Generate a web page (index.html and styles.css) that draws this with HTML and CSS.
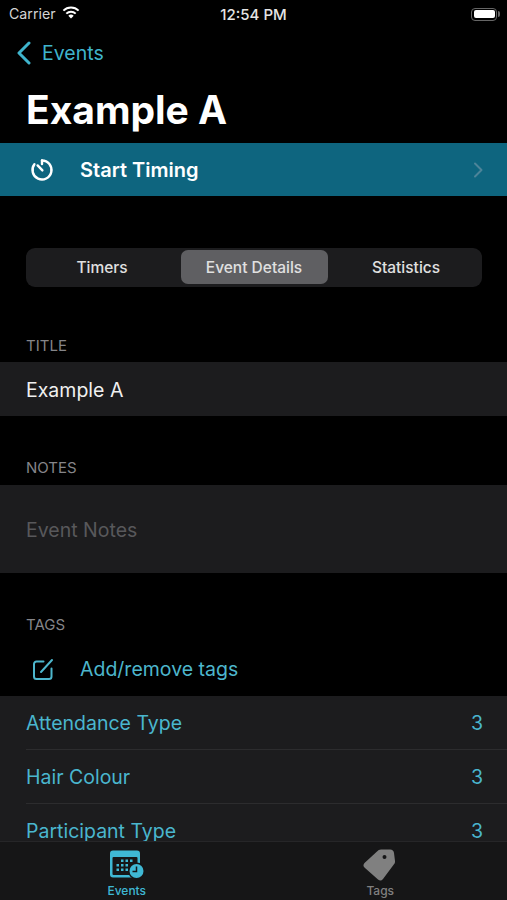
FILE: index.html
```html
<!DOCTYPE html>
<html lang="en">
<head>
    <meta charset="UTF-8">
    <meta name="viewport" content="width=device-width, initial-scale=1.0">
    <title>Example A</title>
    <link rel="stylesheet" href="styles.css">
</head>
<body>

<div class="screen">
    <div class="content">
        <div class="status-bar">
            <div class="status-left">
                <span>Carrier</span>
                <svg class="wifi" width="18" height="13" viewBox="0 0 18 13">
                    <path d="M9 12.6 6.3 9.7a3.900 3.900 0 0 1 5.400 0Z" fill="#fff"/>
                    <path d="M4.300 7.600a6.800 6.800 0 0 1 9.400 0" fill="none" stroke="#fff" stroke-width="2"/>
                    <path d="M1.400 4.600a10.900 10.900 0 0 1 15.200 0" fill="none" stroke="#fff" stroke-width="2"/>
                </svg>
            </div>
            <span class="status-time">12:54 PM</span>
            <div class="battery"><div class="battery-fill"></div></div>
        </div>

        <a class="back-link" href="#">
            <svg width="16" height="24" viewBox="0 0 16 24">
                <path d="M13 2 3 12l10 10" fill="none" stroke="#3fb4cc" stroke-width="3" stroke-linecap="round" stroke-linejoin="round"/>
            </svg>
            <span>Events</span>
        </a>

        <h1>Example A</h1>

        <a class="start-timing" href="#">
            <svg class="row-icon" width="24" height="24" viewBox="0 0 24 24">
                <path d="M12 2.500a9.500 9.500 0 1 1-7.600 3.800" fill="none" stroke="#fff" stroke-width="2.400" stroke-linecap="round"/>
                <path d="M7.600 7.400 12.400 12.400" fill="none" stroke="#fff" stroke-width="2.400" stroke-linecap="round"/>
                <path d="M12 2.500v3.600" fill="none" stroke="#fff" stroke-width="2.400" stroke-linecap="round"/>
            </svg>
            <span class="start-label">Start Timing</span>
            <svg width="10" height="16" viewBox="0 0 10 16">
                <path d="M2 1.500 8.500 8 2 14.500" fill="none" stroke="#4d8499" stroke-width="2" stroke-linecap="round" stroke-linejoin="round"/>
            </svg>
        </a>

        <div class="segments">
            <div class="segment">Timers</div>
            <div class="segment selected">Event Details</div>
            <div class="segment">Statistics</div>
        </div>

        <div class="section-label label-title">TITLE</div>
        <div class="field">Example A</div>

        <div class="section-label label-notes">NOTES</div>
        <div class="notes">Event Notes</div>

        <div class="section-label label-tags">TAGS</div>
        <a class="add-tags" href="#">
            <svg class="row-icon" width="24" height="24" viewBox="0 0 24 24">
                <path d="M12.500 4.500H5.500a2.500 2.500 0 0 0-2.500 2.500V19.500a2.500 2.500 0 0 0 2.500 2.500H18a2.500 2.500 0 0 0 2.500-2.500V11.500" fill="none" stroke="#4db6cc" stroke-width="2" stroke-linecap="round"/>
                <path d="M10 15 21 3" fill="none" stroke="#4db6cc" stroke-width="2" stroke-linecap="round"/>
            </svg>
            <span>Add/remove tags</span>
        </a>

        <div class="tag-list">
            <div class="tag-row"><span>Attendance Type</span><span>3</span></div>
            <div class="tag-row"><span>Hair Colour</span><span>3</span></div>
            <div class="tag-row"><span>Participant Type</span><span>3</span></div>
        </div>
    </div>

    <div class="tab-bar">
        <div class="tab active">
            <svg width="36" height="33" viewBox="0 0 36 30">
                <path d="M4 1h24a3 3 0 0 1 3 3v21a3 3 0 0 1-3 3H4a3 3 0 0 1-3-3V4a3 3 0 0 1 3-3Z" fill="#3fb8d4"/>
                <rect x="3.500" y="7.500" width="25" height="18" rx="1" fill="#161617"/>
                <g fill="#3fb8d4">
                    <rect x="12" y="10" width="2.500" height="2.500"/>
                    <rect x="16.500" y="10" width="2.500" height="2.500"/>
                    <rect x="21" y="10" width="2.500" height="2.500"/>
                    <rect x="7.500" y="14.500" width="2.500" height="2.500"/>
                    <rect x="12" y="14.500" width="2.500" height="2.500"/>
                    <rect x="16.500" y="14.500" width="2.500" height="2.500"/>
                    <rect x="7.500" y="19" width="2.500" height="2.500"/>
                    <rect x="12" y="19" width="2.500" height="2.500"/>
                    <rect x="16.500" y="19" width="2.500" height="2.500"/>
                </g>
                <circle cx="27.500" cy="21.500" r="8.500" fill="#161617"/>
                <circle cx="27.500" cy="21.500" r="7" fill="#3fb8d4"/>
                <path d="M27.500 17v5h-4" fill="none" stroke="#161617" stroke-width="1.500"/>
            </svg>
            <span>Events</span>
        </div>
        <div class="tab">
            <svg width="34" height="33" viewBox="0 0 34 33">
                <path fill-rule="evenodd" fill="#808080" d="M14 3.500Q15.500 1.500 18 1.500H27a4 4 0 0 1 4 3.500L32 13a4 4 0 0 1-1.200 3.500L20 31a3.500 3.500 0 0 1-5 .5L2 20a3.500 3.500 0 0 1-.5-5ZM21.500 7a2 2 0 1 0 0 4 2 2 0 0 0 0-4Z"/>
            </svg>
            <span>Tags</span>
        </div>
    </div>
</div>

</body>
</html>
```

FILE: styles.css
```css
body {
    margin: 0;
    background-color: #000;
    font-family: Inter, "Liberation Sans", sans-serif;
    color: #fff;
}
a {
    text-decoration: none;
    color: inherit;
}
.screen {
    display: flex;
    flex-direction: column;
    height: 900px;
    overflow: hidden;
}
.content {
    flex: 1;
    min-height: 0;
    overflow: hidden;
}
.status-bar {
    display: grid;
    grid-template-columns: 1fr auto 1fr;
    align-items: center;
    height: 28px;
    padding: 0 7px 0 9px;
    font-size: 14.2px;
    color: #d4d4d4;
}
.status-left {
    display: flex;
    align-items: center;
    gap: 6px;
}
.status-left span {
    margin-top: -1px;
}
.wifi {
    margin-top: -3px;
}
.status-time {
    margin-right: 2px;
    font-size: 15px;
    font-weight: 500;
    color: #e4e4e4;
}
.battery {
    position: relative;
    justify-self: end;
    width: 26px;
    height: 13px;
    box-sizing: border-box;
    margin-right: 3px;
    border: 1.500px solid #666;
    border-radius: 4px;
    padding: 1.500px;
}
.battery::after {
    content: "";
    position: absolute;
    top: 2px;
    right: -4px;
    width: 2px;
    height: 6px;
    background-color: #666;
    border-radius: 0 2px 2px 0;
}
.battery-fill {
    height: 100%;
    background-color: #fff;
    border-radius: 2px;
}
.back-link {
    display: flex;
    align-items: center;
    gap: 10px;
    height: 24px;
    margin-top: 13px;
    padding-left: 16px;
    font-size: 19.500px;
    color: #3fb4cc;
}
h1 {
    margin: 22px 0 0;
    padding-left: 26px;
    font-size: 39px;
    line-height: 46px;
    font-weight: 700;
}
.start-timing {
    display: flex;
    align-items: center;
    height: 53px;
    margin-top: 10px;
    padding: 0 24px 0 30px;
    background-color: #0e657f;
    font-size: 20px;
    font-weight: 600;
}
.row-icon {
    flex-shrink: 0;
}
.start-label {
    flex: 1;
    margin-left: 26px;
}
.segments {
    display: grid;
    grid-template-columns: 1fr 1fr 1fr;
    height: 39px;
    box-sizing: border-box;
    margin: 52px 25px 0 26px;
    padding: 2px 0 3px;
    background-color: #1c1c1e;
    border-radius: 9px;
}
.segment {
    display: flex;
    align-items: center;
    justify-content: center;
    font-size: 15.500px;
    font-weight: 500;
    color: #e0e0e0;
}
.segment.selected {
    margin: 0 2.500px;
    background-color: #5f5f62;
    border-radius: 7px;
}
.section-label {
    padding-left: 26px;
    font-size: 15px;
    line-height: 18px;
    color: #858589;
}
.label-title {
    margin-top: 50px;
}
.label-notes {
    margin-top: 43px;
}
.label-tags {
    margin-top: 43px;
}
.field {
    display: flex;
    align-items: center;
    height: 54px;
    box-sizing: border-box;
    margin-top: 7px;
    padding: 2px 0 0 26px;
    background-color: #1c1c1e;
    font-size: 19.500px;
    color: #f0f0f0;
}
.notes {
    height: 88px;
    box-sizing: border-box;
    margin-top: 8px;
    padding: 33px 0 0 26px;
    background-color: #1c1c1e;
    font-size: 19.500px;
    line-height: 24px;
    color: #58585b;
}
.add-tags {
    display: flex;
    align-items: center;
    height: 54px;
    margin-top: 8px;
    padding-left: 31px;
    font-size: 19.500px;
    color: #4db6cc;
}
.add-tags span {
    margin-left: 25px;
}
.tag-list {
    background-color: #1c1c1e;
}
.tag-row {
    display: flex;
    justify-content: space-between;
    align-items: center;
    height: 53px;
    margin-left: 26px;
    padding-right: 24px;
    border-bottom: 1px solid #2c2c2e;
    font-size: 19.500px;
    line-height: 22px;
    color: #4ab6ce;
}
.tab-bar {
    display: flex;
    height: 59px;
    box-sizing: border-box;
    padding-top: 6px;
    background-color: #161617;
    border-top: 1px solid #262628;
}
.tab {
    flex: 1;
    display: flex;
    flex-direction: column;
    align-items: center;
    font-size: 12px;
    font-weight: 500;
    color: #808080;
}
.tab svg {
    height: 33px;
    margin-bottom: 2px;
}
.tab.active {
    color: #3fb8d4;
}
```
